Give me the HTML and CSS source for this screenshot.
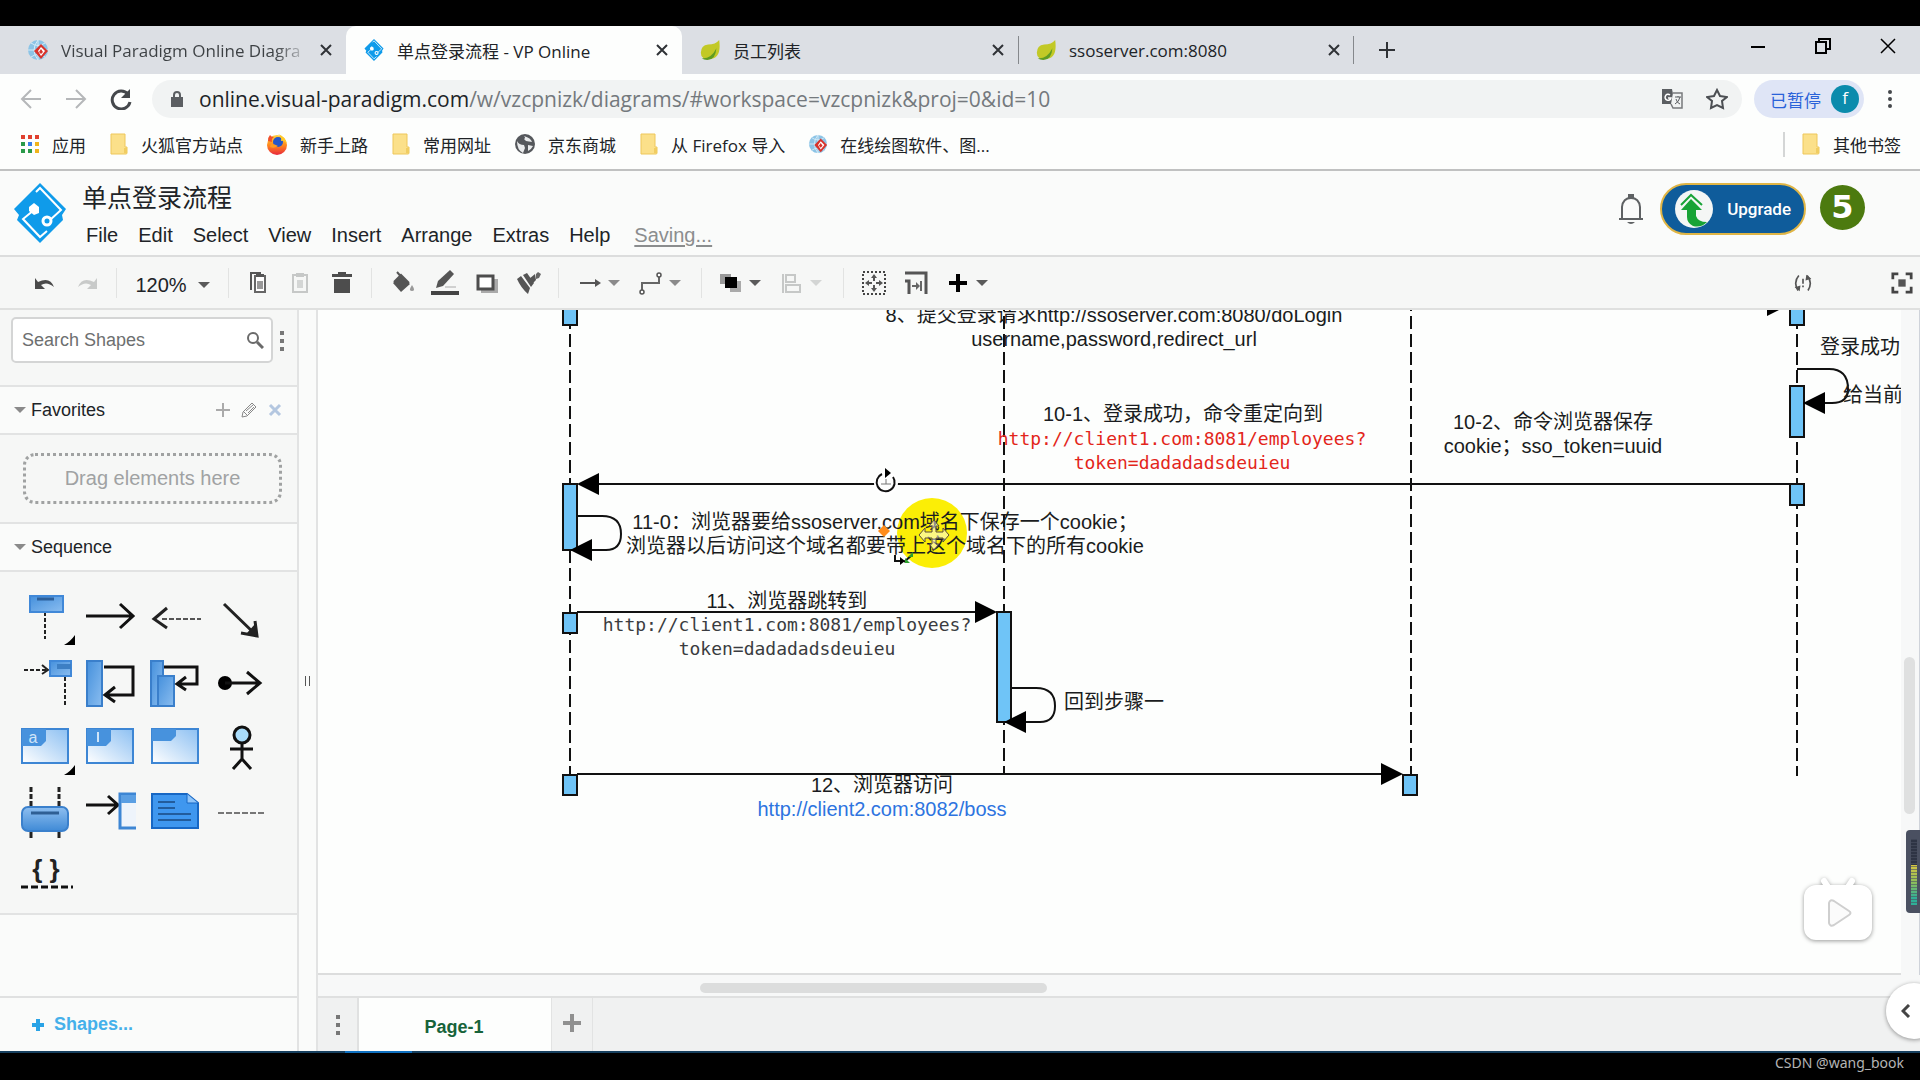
FILE: index.html
```html
<!DOCTYPE html>
<html lang="zh-CN">
<head>
<meta charset="utf-8">
<title>单点登录流程 - VP Online</title>
<link rel="stylesheet" href="styles.css">
</head>
<body>
<svg class="defs" aria-hidden="true">
  <defs>
    <linearGradient id="blue" x1="0" y1="0" x2="1" y2="1"><stop offset="0" stop-color="#4590dc"/><stop offset="1" stop-color="#8abdf0"/></linearGradient>
    <linearGradient id="blueV" x1="0" y1="0" x2="0" y2="1"><stop offset="0" stop-color="#8fbff0"/><stop offset="1" stop-color="#3f8ad6"/></linearGradient>
    <linearGradient id="pale" x1="0" y1="1" x2="1" y2="0"><stop offset="0" stop-color="#ffffff"/><stop offset="1" stop-color="#8dc0f2"/></linearGradient>
    <linearGradient id="fox" x1="0" y1="0" x2="0" y2="1"><stop offset="0" stop-color="#ffd23a"/><stop offset=".5" stop-color="#ff8a1c"/><stop offset="1" stop-color="#e8273d"/></linearGradient>
    <symbol id="i-close" viewBox="0 0 16 16"><path d="M3 3l10 10M13 3L3 13" stroke="#2f3236" stroke-width="2" fill="none"/></symbol>
    <symbol id="i-vpglobe" viewBox="0 0 22 22"><circle cx="11" cy="11" r="10" fill="#8cc4e6"/><path d="M11 1v20M1 11h20M4 4q7 5 14 0M4 18q7-5 14 0M11 1q-8 10 0 20" stroke="#d5ebf7" fill="none"/><path d="M14 5l7 7-7 8-7-8z" fill="#d8342c"/><path d="M14 8l4 4-4 5-3-5z" fill="#fff"/><path d="M14 10l2 3-2 2-2-2z" fill="#d8342c"/></symbol>
    <symbol id="i-vp" viewBox="0 0 52 60"><path d="M26 0l26 26-4 6 1 5-23 23L3 37l2-5-5-6z" fill="#0f9bea"/><path d="M22 9l4-4 21 22-11 10" fill="none" stroke="#fff" stroke-width="2"/><circle cx="33" cy="38" r="4" fill="#0f9bea" stroke="#fff" stroke-width="3"/><path d="M20 27L9 36l17 18 7-6" fill="none" stroke="#fff" stroke-width="2"/><path d="M15 24l5-4 5 4v6l-5 2-5-4z" fill="#fff"/></symbol>
    <symbol id="i-leaf" viewBox="0 0 24 24"><path d="M22 1q3 21-11 21-9 0-9-7 0-8 8-9 8 0 12-5z" fill="#c2c926"/><path d="M3 21q10 1 16-11-1 13-10 13-4 0-6-2z" fill="#5f9c22"/></symbol>
    <symbol id="i-folder" viewBox="0 0 20 22"><path d="M2 1h14v13h2v6q0 1-1 1H2z" fill="#fbe08a" stroke="#eec75a"/><path d="M15 15h3v5h-3z" fill="#f0cd62"/></symbol>
    <symbol id="i-caret" viewBox="0 0 14 8"><path d="M1 1h12L7 7z" fill="currentColor"/></symbol>
    <symbol id="i-dots" viewBox="0 0 6 22"><path d="M1 1h4v4H1zM1 9h4v4H1zM1 17h4v4H1z" fill="currentColor"/></symbol>
    <symbol id="i-corner" viewBox="0 0 12 12"><path d="M0 11Q6 8 11 1v10z" fill="#000"/></symbol>
  </defs>
</svg>

<div class="browser">
  <header class="tabstrip">
    <div class="tab"><svg class="favicon"><use href="#i-vpglobe"/></svg><span class="tab-title fade">Visual Paradigm Online Diagra</span><button class="close" aria-label="关闭"><svg><use href="#i-close"/></svg></button></div>
    <div class="tab active"><svg class="favicon"><use href="#i-vp"/></svg><span class="tab-title">单点登录流程 - VP Online</span><button class="close" aria-label="关闭"><svg><use href="#i-close"/></svg></button></div>
    <div class="tab"><svg class="favicon"><use href="#i-leaf"/></svg><span class="tab-title">员工列表</span><button class="close" aria-label="关闭"><svg><use href="#i-close"/></svg></button></div>
    <div class="tab ruled"><svg class="favicon"><use href="#i-leaf"/></svg><span class="tab-title">ssoserver.com:8080</span><button class="close" aria-label="关闭"><svg><use href="#i-close"/></svg></button></div>
    <button class="newtab" aria-label="新标签页"><svg viewBox="0 0 18 18" width="18" height="18"><path d="M9 1v16M1 9h16" stroke="#2f3236" stroke-width="2"/></svg></button>
    <div class="window-buttons">
      <button aria-label="最小化"><svg viewBox="0 0 16 16" width="16" height="16"><path d="M1 9h14" stroke="#000" stroke-width="2"/></svg></button>
      <button aria-label="还原"><svg viewBox="0 0 16 16" width="16" height="16"><path d="M4 4V1h11v10h-3M1 4h10v11H1z" stroke="#000" stroke-width="2" fill="none"/></svg></button>
      <button aria-label="关闭窗口"><svg viewBox="0 0 16 16" width="16" height="16"><path d="M1 1l14 14M15 1L1 15" stroke="#000" stroke-width="1.5"/></svg></button>
    </div>
  </header>

  <div class="navbar">
    <button class="nav" aria-label="后退"><svg viewBox="0 0 22 22" width="22" height="22"><path d="M21 11H3M11 2l-9 9 9 9" stroke="#b5b7b9" stroke-width="2" fill="none"/></svg></button>
    <button class="nav" aria-label="前进"><svg viewBox="0 0 22 22" width="22" height="22"><path d="M1 11h18M11 2l9 9-9 9" stroke="#b5b7b9" stroke-width="2" fill="none"/></svg></button>
    <button class="nav" aria-label="重新加载"><svg viewBox="0 0 22 22" width="22" height="22"><path d="M18 6a9 9 0 1 0 2 8" stroke="#45484c" stroke-width="3" fill="none"/><path d="M20 1v9h-9z" fill="#45484c"/></svg></button>
    <div class="omnibox">
      <svg viewBox="0 0 14 18" width="14" height="18"><path d="M1 7h12v10H1z" fill="#5b5e62"/><path d="M4 8V5a3 3 0 0 1 6 0v3" fill="none" stroke="#5b5e62" stroke-width="2"/></svg>
      <a class="url" href="#">online.visual-paradigm.com<span>/w/vzcpnizk/diagrams/#workspace=vzcpnizk&amp;proj=0&amp;id=10</span></a>
      <svg viewBox="0 0 22 22" width="22" height="22"><path d="M1 1h10l3 15H1z" fill="#5b5e62"/><path d="M12 5h9v15h-9l-2-4" fill="#f1f3f3" stroke="#77797c" stroke-width="1.5"/><path d="M9 7a3 3 0 1 0 1 3H7" stroke="#fff" stroke-width="1.5" fill="none"/><path d="M14 9h6M17 8v1M19 9q-1 5-5 7M15 11q1 4 4 5" stroke="#5b5e62" fill="none"/></svg>
      <svg viewBox="0 0 22 22" width="22" height="22"><path d="M11 2l3 6 7 1-5 4 1 7-6-3-6 3 1-7-5-4 7-1z" fill="none" stroke="#4c4f53" stroke-width="2"/></svg>
    </div>
    <button class="profile">已暂停<span class="avatar">f</span></button>
    <button class="kebab" aria-label="菜单"><svg viewBox="0 0 6 20" width="6" height="20"><circle cx="3" cy="3" r="2" fill="#45484c"/><circle cx="3" cy="10" r="2" fill="#45484c"/><circle cx="3" cy="17" r="2" fill="#45484c"/></svg></button>
  </div>

  <nav class="bookmarks">
    <a href="#"><svg viewBox="0 0 20 20" width="20" height="20"><path d="M1 1h4v4H1zM8 1h4v4H8zM15 1h4v4h-4z" fill="#e0402f"/><path d="M1 8h4v4H1z" fill="#2a9a4a"/><path d="M8 8h4v4H8z" fill="#3a7fe8"/><path d="M15 8h4v4h-4z" fill="#f0b41c"/><path d="M1 15h4v4H1zM8 15h4v4H8z" fill="#2a9a4a"/><path d="M15 15h4v4h-4z" fill="#f0b41c"/></svg>应用</a>
    <a href="#"><svg class="mark"><use href="#i-folder"/></svg>火狐官方站点</a>
    <a href="#"><svg viewBox="0 0 22 22" width="22" height="22"><circle cx="11" cy="12" r="10" fill="url(#fox)"/><path d="M2 8q0-4 2-6 1 2 4 2-3 2-2 5z" fill="#f0502a"/><circle cx="12" cy="9" r="5" fill="#2456c8"/><path d="M12 1q7 2 9 10-3-4-6-3 1-4-3-7z" fill="#ffc929"/><path d="M5 11q4 0 7 2-4 3-8 1z" fill="#ff9a1f"/></svg>新手上路</a>
    <a href="#"><svg class="mark"><use href="#i-folder"/></svg>常用网址</a>
    <a href="#"><svg viewBox="0 0 22 22" width="22" height="22"><circle cx="11" cy="11" r="10" fill="#55585c"/><path d="M3 8q2 4 7 4l1 3-2 5q-6-3-6-12zM10 3q2 2 0 3l2 2 6 1q-1-4-8-6zM14 12l5 1q-2 4-5 5z" fill="#e9ebec"/></svg>京东商城</a>
    <a href="#"><svg class="mark"><use href="#i-folder"/></svg>从 Firefox 导入</a>
    <a href="#"><svg class="mark"><use href="#i-vpglobe"/></svg>在线绘图软件、图...</a>
    <a href="#" class="other"><svg class="mark"><use href="#i-folder"/></svg>其他书签</a>
  </nav>

  <div class="apphead">
    <svg class="logo" viewBox="0 0 52 60"><use href="#i-vp"/></svg>
    <div class="titles">
      <h1>单点登录流程</h1>
      <nav class="menu">
        <button>File</button><button>Edit</button><button>Select</button><button>View</button><button>Insert</button><button>Arrange</button><button>Extras</button><button>Help</button><a href="#">Saving...</a>
      </nav>
    </div>
    <div class="account">
      <button aria-label="Notifications"><svg viewBox="0 0 26 32" width="26" height="32"><path d="M1 26h24M4 26V14q1-9 9-9t9 9v12" fill="none" stroke="#5e6163" stroke-width="2"/><path d="M10 1h6v4h-6zM9 29h8q-4 4-8 0z" fill="#5e6163"/></svg></button>
      <button class="upgrade"><svg viewBox="0 0 38 38" width="38" height="38"><circle cx="19" cy="19" r="19" fill="#f4f6f5"/><path d="M16 9l11 11h-6v6q2 6 11 6-6 6-14 4-6-3-6-9v-7H6z" fill="#18a336"/><path d="M6 15L16 5l11 10" stroke="#18a336" stroke-width="2" fill="none"/></svg>Upgrade</button>
      <button class="user">5</button>
    </div>
  </div>

  <div class="toolbar">
    <div class="group history">
      <button aria-label="Undo"><svg viewBox="0 0 24 24"><path d="M2 7v11h10l-4-4q6-4 13 2-4-11-16-5z" fill="#4a4a4a"/></svg></button>
      <button aria-label="Redo"><svg viewBox="0 0 24 24"><path d="M22 7v11H12l4-4q-6-4-13 2 4-11 16-5z" fill="#c8cac9"/></svg></button>
    </div>
    <div class="group zoomer"><button class="drop">120%<svg class="caret"><use href="#i-caret"/></svg></button></div>
    <div class="group edit">
      <button aria-label="Copy"><svg viewBox="0 0 24 24"><path d="M5 19V2h10" fill="none" stroke="#555" stroke-width="2"/><path d="M9 5h10v16H9z" fill="#fff" stroke="#666" stroke-width="2"/><path d="M11 10h6v8h-6z" fill="#999"/><path d="M10 3h8v3h-8z" fill="#555"/></svg></button>
      <button aria-label="Paste"><svg viewBox="0 0 24 24"><path d="M5 4h14v17H5z" fill="none" stroke="#c6c8c7" stroke-width="2"/><path d="M9 9h6v8H9z" fill="#d4d6d5"/><path d="M8 2h8v4H8z" fill="#c6c8c7"/></svg></button>
      <button aria-label="Delete"><svg viewBox="0 0 24 24"><path d="M2 3h6V1h8v2h6v3H2zM4 8h16v14H4z" fill="#4d4d4d"/></svg></button>
    </div>
    <div class="group style">
      <button aria-label="Fill"><svg viewBox="0 0 24 24"><path d="M2 12l8-7 9 8-9 8z" fill="#555"/><path d="M3 11L10 4l8 8M6 1l7 8" stroke="#555" stroke-width="2" fill="none"/><path d="M21 14q4 6 0 6t0-6z" fill="#999"/></svg></button>
      <button aria-label="Line"><svg class="wide" viewBox="0 0 30 26"><path d="M6 18l2-7L20 0l4 4-11 12z" fill="#555"/><path d="M15 17h11" stroke="#aaa" stroke-width="1"/><path d="M1 21h28v4H1z" fill="#444"/></svg></button>
      <button aria-label="Shadow"><svg viewBox="0 0 24 24"><path d="M6 8h17v14H6z" fill="#aaa"/><path d="M3 5h15v13H3z" fill="#fff" stroke="#4d4d4d" stroke-width="3"/></svg></button>
      <button aria-label="Copy style"><svg viewBox="0 0 24 24"><path d="M0 8l4-3 9 12-2 6Q4 17 0 8zM6 4l4-2 7 10-3 4zM12 8l6-5 1 6-3 3z" fill="#555"/><path d="M19 3l2-2 3 2-2 4-3 1z" fill="#666"/></svg></button>
    </div>
    <div class="group lines">
      <button class="drop" aria-label="Connection"><svg viewBox="0 0 24 24"><path d="M2 12h18" stroke="#555" stroke-width="2"/><path d="M17 8l6 4-6 4z" fill="#555"/></svg><svg class="caret mid"><use href="#i-caret"/></svg></button>
      <button class="drop" aria-label="Waypoints"><svg viewBox="0 0 24 24"><path d="M3 19v-7h17V6" fill="none" stroke="#666" stroke-width="2"/><circle cx="3" cy="21" r="2" fill="#fff" stroke="#555" stroke-width="1.5"/><circle cx="20" cy="4" r="2" fill="#fff" stroke="#555" stroke-width="1.5"/></svg><svg class="caret mid"><use href="#i-caret"/></svg></button>
    </div>
    <div class="group order">
      <button class="drop" aria-label="To front"><svg viewBox="0 0 24 24"><path d="M1 3h11v10H1z" fill="#999"/><path d="M11 10h11v11H11z" fill="#aaa"/><path d="M6 6h12v11H6z" fill="#000"/></svg><svg class="caret"><use href="#i-caret"/></svg></button>
      <button class="drop" aria-label="Align"><svg viewBox="0 0 24 24"><path d="M3 3v19M6 4h9v7H6zM6 14h14v7H6z" fill="none" stroke="#c6c8c7" stroke-width="2"/></svg><svg class="caret dim"><use href="#i-caret"/></svg></button>
    </div>
    <div class="group fit">
      <button aria-label="Fit window"><svg viewBox="0 0 24 24"><path d="M1 1h22v22H1z" fill="none" stroke="#444" stroke-width="2" stroke-dasharray="2 2"/><path d="M12 3l3 4h-2v3h-2V7H9zM12 21l3-4h-2v-3h-2v3H9zM3 12l4-3v2h3v2H7v2zM21 12l-4-3v2h-3v2h3v2z" fill="#555"/></svg></button>
      <button aria-label="Fit width"><svg viewBox="0 0 24 24"><path d="M1 2h21v21M1 10h4v13" fill="none" stroke="#555" stroke-width="3"/><path d="M8 15h6M17 10v10" stroke="#666" stroke-width="2"/><path d="M12 11l4 4-4 4z" fill="#666"/></svg></button>
      <button class="drop" aria-label="Insert"><svg viewBox="0 0 24 24"><path d="M12 3v18M3 12h18" stroke="#000" stroke-width="4"/></svg><svg class="caret"><use href="#i-caret"/></svg></button>
    </div>
    <div class="views">
      <button aria-label="Sync"><svg viewBox="0 0 24 24" width="20" height="20"><path d="M7 3Q0 11 6 21M17 3q7 8 1 18" fill="none" stroke="#555" stroke-width="2"/><path d="M2 17l6 5 1-7zM22 7l-6-5-1 7zM11 7h2v6h-2zM11 15h2v2h-2z" fill="#555"/></svg></button>
      <button aria-label="Fullscreen"><svg viewBox="0 0 24 24" width="22" height="22"><path d="M2 8V2h6M16 2h6v6M22 16v6h-6M8 22H2v-6" fill="none" stroke="#444" stroke-width="3"/><path d="M8 8h8v8H8z" fill="#555"/></svg></button>
    </div>
  </div>

  <main class="workspace">
    <aside class="sidebar">
      <div class="search">
        <label class="searchbox"><input type="text" placeholder="Search Shapes" aria-label="Search Shapes"><svg viewBox="0 0 18 18" width="18" height="18"><circle cx="7" cy="7" r="5" fill="none" stroke="#6a6a6a" stroke-width="2"/><path d="M11 11l6 6" stroke="#6a6a6a" stroke-width="3"/></svg></label>
        <button aria-label="Options"><svg class="dots"><use href="#i-dots"/></svg></button>
      </div>
      <div class="section">
        <svg class="caret mid"><use href="#i-caret"/></svg><h2>Favorites</h2>
        <button aria-label="Add"><svg viewBox="0 0 16 16" width="16" height="16"><path d="M8 1v14M1 8h14" stroke="#aaa" stroke-width="2"/></svg></button>
        <button aria-label="Edit"><svg viewBox="0 0 16 16" width="16" height="16"><path d="M1 15l1-5L11 1l4 4-9 9zM3 10l3 3M5 9l7-6M7 11l6-6" fill="none" stroke="#888"/></svg></button>
        <button aria-label="Remove"><svg viewBox="0 0 16 16" width="16" height="16"><path d="M3 3l10 10M13 3L3 13" stroke="#b4c7e0" stroke-width="3"/></svg></button>
      </div>
      <div class="dropzone"><div>Drag elements here</div></div>
      <div class="section"><svg class="caret mid"><use href="#i-caret"/></svg><h2>Sequence</h2></div>
      <div class="palette">
        <svg viewBox="0 0 65 65"><path d="M31 28v27" stroke="#222" stroke-width="2" stroke-dasharray="4 2"/><path d="M16 12h33v16H16z" fill="url(#blue)" stroke="#4088d8" stroke-width="2"/><path d="M23 15h17" stroke="#2c5f9a" stroke-width="3"/><use href="#i-corner" x="50" y="50" width="12" height="12"/></svg>
        <svg viewBox="0 0 65 65"><path d="M7 32h46M41 20l13 12-13 12" fill="none" stroke="#111" stroke-width="3"/></svg>
        <svg viewBox="0 0 65 65"><path d="M18 35h39" stroke="#555" stroke-width="2" stroke-dasharray="5 2"/><path d="M23 24L10 35l13 9" fill="none" stroke="#222" stroke-width="3"/></svg>
        <svg viewBox="0 0 65 65"><path d="M15 20l32 31M32 49l16 3-2-15" fill="none" stroke="#222" stroke-width="3"/><path d="M38 49l10 4-2-13z" fill="#222"/></svg>
        <svg viewBox="0 0 65 65"><path d="M10 21h22M51 28v30" stroke="#222" stroke-width="2" stroke-dasharray="4 2"/><path d="M28 16l6 5-6 4" fill="none" stroke="#222" stroke-width="2"/><path d="M36 12h21v15H36z" fill="url(#blue)" stroke="#4088d8" stroke-width="2"/><path d="M43 15h14v5H43z" fill="#3d7fc4"/></svg>
        <svg viewBox="0 0 65 65"><path d="M8 12h15v45H8z" fill="url(#blue)" stroke="#3a7fcb" stroke-width="2"/><path d="M25 18h29v28H27M36 38l-10 8 10 7" fill="none" stroke="#111" stroke-width="3"/></svg>
        <svg viewBox="0 0 65 65"><path d="M7 12h12v45H7z" fill="url(#blue)" stroke="#3a7fcb" stroke-width="2"/><path d="M14 27h16v30H14z" fill="url(#blue)" stroke="#3a7fcb" stroke-width="2"/><path d="M20 18h33v17H34M42 28l-9 7 9 6" fill="none" stroke="#111" stroke-width="3"/></svg>
        <svg viewBox="0 0 65 65"><circle cx="16" cy="34" r="7"/><path d="M16 34h34M38 23l13 11-13 11" fill="none" stroke="#111" stroke-width="3"/></svg>
        <svg viewBox="0 0 65 65"><path d="M8 15h46v34H8z" fill="url(#pale)" stroke="#3d86d4" stroke-width="2"/><path d="M8 15h24v12l-5 5H8z" fill="#4792dd"/><text x="19" y="29" class="frag">a</text><use href="#i-corner" x="50" y="50" width="12" height="12"/></svg>
        <svg viewBox="0 0 65 65"><path d="M8 15h46v34H8z" fill="url(#pale)" stroke="#3d86d4" stroke-width="2"/><path d="M8 15h24v12l-5 5H8z" fill="#4792dd"/><path d="M19 18v10" stroke="#cfe4f8" stroke-width="2"/></svg>
        <svg viewBox="0 0 65 65"><path d="M8 15h46v34H8z" fill="url(#pale)" stroke="#3d86d4" stroke-width="2"/><path d="M8 15h24v7l-5 5H8z" fill="#4792dd"/></svg>
        <svg viewBox="0 0 65 65"><circle cx="33" cy="21" r="8" fill="#a9dcfa" stroke="#111" stroke-width="3"/><path d="M33 30v16M21 35h23M33 45l-9 10M33 45l9 10" fill="none" stroke="#111" stroke-width="3"/></svg>
        <svg viewBox="0 0 65 65"><path d="M17 8v20M45 8v20" stroke="#222" stroke-width="3" stroke-dasharray="5 2"/><path d="M17 53v6M45 53v6" stroke="#222" stroke-width="3"/><rect x="8" y="28" width="46" height="24" rx="6" fill="url(#blueV)" stroke="#3a80cc" stroke-width="2"/><path d="M17 34h28" stroke="#2f5f94" stroke-width="3"/></svg>
        <svg viewBox="0 0 65 65"><path d="M7 26h31M29 17l10 9-10 9" fill="none" stroke="#111" stroke-width="3"/><path d="M57 15H41v34h16" fill="#eef4fb" stroke="#3d86d4" stroke-width="3"/><path d="M42 16h15v8H42z" fill="#5b9fe3"/></svg>
        <svg viewBox="0 0 65 65"><path d="M8 15h35l11 9v25H8z" fill="#3f97ef" stroke="#1767c4" stroke-width="2"/><path d="M43 15v9h11" fill="#8fc5fa" stroke="#1767c4"/><path d="M14 23h17M14 29h17M14 35h33M14 41h33" stroke="#225c9c" stroke-width="2"/></svg>
        <svg viewBox="0 0 65 65"><path d="M9 34h48" stroke="#777" stroke-width="2" stroke-dasharray="6 2"/></svg>
        <svg viewBox="0 0 65 65"><text x="32" y="34" class="brace">{ }</text><path d="M7 43h52" stroke="#111" stroke-width="3" stroke-dasharray="7 3"/></svg>
      </div>
      <div class="more"><button><svg viewBox="0 0 14 14" width="14" height="14"><path d="M7 1v12M1 7h12" stroke="#29a3e6" stroke-width="4"/></svg>Shapes...</button></div>
    </aside>

    <div class="splitter"><span></span></div>

    <section class="editor">
      <div class="stage">
        <div class="canvas">
          <svg class="diagram" width="1600" height="680" viewBox="318 310 1600 680">
            <circle cx="932" cy="533" r="35" fill="#fbee06"/>
            <g class="lifeline"><path d="M570 298V774M1004 298V774M1411 298V774M1797 298V776"/></g>
            <g class="activation">
              <path d="M563 300h14v25h-14zM563 484h14v66h-14zM563 613h14v20h-14zM563 775h14v20h-14zM997 612h14v110h-14zM1403 775h14v20h-14zM1790 300h14v25h-14zM1790 386h14v51h-14zM1790 484h14v21h-14z"/>
            </g>
            <g class="message">
              <path d="M598 484H1790M577 516h25q19 0 19 18q0 16-15 16H592M577 612H975M1011 688h25q19 0 19 18q0 16-15 16H1026M577 774H1381M1797 369h32q19 0 19 20q0 14-16 14h-8"/>
            </g>
            <path class="heads" d="M577 484l22-11v22zM570 550l22-11v22zM997 612l-22-11v22zM1004 722l22-11v22zM1403 774l-22-11v22zM1803 403l22-11v22zM1789 305l-22-11v22z"/>
            <g class="label">
              <text x="1114" y="322">8、提交登录请求http://ssoserver.com:8080/doLogin</text>
              <text x="1114" y="346">username,password,redirect_url</text>
              <text x="1183" y="421">10-1、登录成功，命令重定向到</text>
              <text x="1182" y="445" class="mono red">http://client1.com:8081/employees?</text>
              <text x="1182" y="469" class="mono red">token=dadadadsdeuieu</text>
              <text x="1553" y="429">10-2、命令浏览器保存</text>
              <text x="1553" y="453">cookie；sso_token=uuid</text>
              <text x="885" y="529">11-0：浏览器要给ssoserver.com域名下保存一个cookie；</text>
              <text x="885" y="553">浏览器以后访问这个域名都要带上这个域名下的所有cookie</text>
              <text x="787" y="608">11、浏览器跳转到</text>
              <text x="787" y="631" class="mono">http://client1.com:8081/employees?</text>
              <text x="787" y="655" class="mono">token=dadadadsdeuieu</text>
              <text x="1114" y="709">回到步骤一</text>
              <text x="882" y="792">12、浏览器访问</text>
              <text x="882" y="816" class="link">http://client2.com:8082/boss</text>
              <text x="1860" y="354">登录成功</text>
              <text x="1873" y="402">给当前</text>
            </g>
            <circle cx="886" cy="483" r="12" fill="#fff"/>
            <path d="M882 474a9 9 0 1 0 11 3" fill="none" stroke="#111" stroke-width="2"/><path d="M885 468l6 5-6 5z"/><path d="M881 484h10M886 479v5" stroke="#777" fill="none"/>
            <path d="M884 525l6 6-6 6-6-6z" fill="#ff8c1a"/>
            <path d="M895 555v6h6M904 562l8-7" fill="none" stroke="#111" stroke-width="2"/><path d="M900 557l5 4-5 4z"/><path d="M905 558v5h5zM913 552v5h-5z" fill="#2da02d"/>
            <path d="M934 520l5 6h-3v6h7v-4l6 7-6 7v-4h-7v6h3l-5 6-5-6h3v-6h-7v4l-6-7 6-7v4h7v-6h-3z" fill="#fff" fill-opacity=".5" stroke="#5b4a3c"/>
          </svg>
          <div class="player"><svg viewBox="0 0 80 76" width="80" height="76"><path d="M26 10l6 9M54 10l-6 9" stroke="#fff" stroke-width="6" stroke-linecap="round"/><rect x="6" y="14" width="68" height="55" rx="12" fill="#fff"/><path d="M31 32v20q1 4 5 2l15-10q3-2 0-4L36 30q-4-2-5 2z" fill="#fbfbfb" stroke="#cfcfcf" stroke-width="2"/></svg></div>
        </div>
        <div class="hscroll"><span></span></div>
        <div class="vscroll"><span></span></div>
      </div>
      <footer class="pages">
        <button class="pagemenu" aria-label="Pages"><svg class="dots"><use href="#i-dots"/></svg></button>
        <button class="page">Page-1</button>
        <button class="addpage" aria-label="Insert page"><svg viewBox="0 0 20 20" width="20" height="20"><path d="M10 1v18M1 10h18" stroke="#909090" stroke-width="4"/></svg></button>
      </footer>
    </section>
  </main>
  <div class="meter"><span></span></div>
  <button class="expand" aria-label="Show format panel"><svg viewBox="0 0 10 14" width="10" height="14"><path d="M8 1L2 7l6 6" fill="none" stroke="#444" stroke-width="3"/></svg></button>
</div>
<div class="taskline"><span></span></div>
<p class="watermark">CSDN @wang_book</p>
</body>
</html>
```
FILE: styles.css
```css
* { box-sizing: border-box; }

body {
  margin: 0;
  padding-top: 26px;
  height: 100vh;
  display: flex;
  flex-direction: column;
  overflow: hidden;
  background: #000;
  color: #202327;
  font-family: "Liberation Sans", "Noto Sans CJK SC", sans-serif;
}

button {
  display: flex;
  align-items: center;
  justify-content: center;
  padding: 0;
  border: 0;
  background: none;
  color: inherit;
  font: inherit;
}

a { color: inherit; text-decoration: none; }
svg { display: block; flex: none; }
h1, h2, p { margin: 0; font-weight: 400; }
.defs { position: absolute; width: 0; height: 0; }

.browser {
  position: relative;
  flex: 1;
  min-height: 0;
  display: flex;
  flex-direction: column;
  overflow: hidden;
  background: #fdfefd;
}

/* Browser chrome */
.tabstrip, .navbar, .bookmarks { font-family: "Open Sans", "Noto Sans CJK SC", sans-serif; }

.tabstrip {
  display: flex;
  align-items: center;
  height: 48px;
  padding-left: 10px;
  background: #dcdfe4;
  font-size: 17px;
}

.tab {
  display: flex;
  align-items: center;
  width: 336px;
  height: 100%;
  padding: 0 12px 0 17px;
}
.tab.active { background: #fdfefd; border-radius: 10px 10px 0 0; }
.ruled { background: linear-gradient(#85888c, #85888c) left center / 1px 28px no-repeat, linear-gradient(#85888c, #85888c) right center / 1px 28px no-repeat; }
.favicon { width: 22px; height: 22px; margin-right: 12px; }
.tab-title { flex: 1; min-width: 0; overflow: hidden; white-space: nowrap; }
.fade { color: transparent; background: linear-gradient(90deg, #3c4043 86%, #dcdfe4 100%); background-clip: text; }
.close { width: 16px; height: 16px; margin-left: 8px; }
.close svg { width: 16px; height: 16px; }
.newtab { width: 66px; height: 40px; }
.window-buttons { display: flex; margin-left: auto; padding-bottom: 8px; }
.window-buttons button { width: 65px; height: 40px; }

.navbar { display: flex; align-items: center; height: 50px; padding: 0 26px 0 8px; }
.nav { width: 45px; height: 38px; }
.omnibox {
  flex: 1;
  display: flex;
  align-items: center;
  height: 38px;
  margin-left: 9px;
  padding: 0 14px 0 18px;
  border-radius: 19px;
  background: #f1f3f3;
}
.url { flex: 1; padding-left: 15px; font-size: 21px; line-height: 28px; white-space: nowrap; }
.url span { color: #74797d; }
.omnibox svg + svg { margin-left: 23px; }
.profile {
  gap: 10px;
  height: 38px;
  margin: 0 22px 0 12px;
  padding: 0 5px 0 16px;
  border-radius: 19px;
  background: #dfe5f6;
  color: #2a62d9;
  font-size: 17px;
}
.avatar { width: 28px; height: 28px; border-radius: 50%; background: #0b8bac; color: #fff; line-height: 26px; }
.kebab { width: 8px; height: 38px; }

.bookmarks { display: flex; align-items: center; gap: 23px; height: 47px; padding: 0 19px 5px 20px; font-size: 17px; border-bottom: 2px solid #c0c1c1; }
.bookmarks a { display: flex; align-items: center; gap: 12px; white-space: nowrap; }
.bookmarks .mark { width: 20px; height: 22px; }
.bookmarks .other { margin-left: auto; padding-left: 16px; border-left: 2px solid #d4d6d6; }

/* Application header */
.apphead { display: flex; height: 86px; padding: 12px 50px 0 14px; background: #fafbfa; border-bottom: 2px solid #dcdddd; }
.logo { width: 52px; height: 60px; }
.titles { padding-left: 16px; }
.titles h1 { font-size: 25px; line-height: 30px; }
.menu { display: flex; gap: 20px; padding: 10px 0 0 4px; font-size: 20px; line-height: 24px; }
.menu a { margin-left: 4px; color: #8b8d8e; text-decoration: underline; text-underline-offset: 3px; }
.account { display: flex; align-items: center; gap: 16px; margin-left: auto; height: 52px; }
.upgrade {
  gap: 14px;
  height: 52px;
  padding: 0 13px;
  border: 2px solid #e0b545;
  border-radius: 26px;
  background: #0f5c9b;
  color: #fff;
  font: 500 17px Roboto, sans-serif;
}
.user { width: 45px; height: 45px; margin: 0 5px 4px -2px; border-radius: 50%; background: #4c7a0f; color: #fff; font: 700 32px "DejaVu Sans", sans-serif; }

/* Toolbar */
.toolbar { display: flex; align-items: center; height: 53px; background: #f6f7f6; border-bottom: 2px solid #dfe0df; }
.group { display: flex; height: 30px; border-right: 1px solid #e2e3e2; }
.group button { width: 42px; height: 30px; }
.group button svg { width: 24px; height: 24px; }
.group button .wide { width: 30px; height: 26px; }
.group .drop { width: 61px; gap: 5px; }
.caret, .group button .caret { width: 14px; height: 8px; color: #5a5a5a; }
.mid, .group button .mid { color: #8a8a8a; }
.group button .dim { color: #d3d5d4; }
.history { padding: 0 8px 0 24px; }
.zoomer { padding: 0 17px 0 18px; font-size: 20px; }
.group.zoomer .drop { width: 76px; gap: 10px; padding: 5px 0 0; }
.edit { padding: 0 8px; }
.style { padding: 0 8px 0 10px; }
.lines { padding: 0 10px; }
.order { padding: 0 11px 0 8px; }
.group.fit { padding-left: 9px; border: 0; }
.views { display: flex; gap: 78px; margin-left: auto; padding-right: 7px; }

/* Workspace */
.workspace { flex: 1; min-height: 0; display: flex; background: #fafbfa; }
.sidebar { display: flex; flex-direction: column; width: 299px; border-right: 2px solid #e2e3e3; }
.search { display: flex; align-items: flex-start; gap: 6px; height: 75px; padding: 7px 0 0 11px; background: #f6f7f6; }
.searchbox { display: flex; align-items: center; width: 262px; height: 46px; padding: 0 7px 0 9px; border: 2px solid #d4d5d5; border-radius: 5px; background: #fff; }
.searchbox input { flex: 1; min-width: 0; padding: 0; border: 0; background: none; font: 18px "Liberation Sans", sans-serif; color: #555; }
.searchbox input::placeholder { color: #6d6f70; opacity: 1; }
.search button { height: 48px; }
.dots { width: 6px; height: 22px; color: #777; }
.section { display: flex; align-items: center; gap: 10px; height: 50px; padding: 0 14px 0 13px; border-top: 2px solid #e2e3e3; border-bottom: 2px solid #e2e3e3; }
.section h2 { flex: 1; margin-left: -6px; font-size: 18px; }
.dropzone { padding: 18px 15px 18px 23px; background: #f6f7f6; }
.dropzone div { height: 51px; border: 3px dotted #a0a2a2; border-radius: 12px; color: #a0a2a3; font-size: 20px; line-height: 45px; text-align: center; }
.palette { display: grid; grid-template-columns: repeat(4, 65px); padding: 12px 14px 4px; background: #f6f7f6; border-bottom: 2px solid #e2e3e3; }
.palette svg { width: 65px; height: 65px; }
.frag { fill: #cfe4f8; font-size: 16px; text-anchor: middle; }
.brace { fill: #222; font-size: 26px; font-weight: 700; text-anchor: middle; }
.more { display: flex; height: 55px; margin-top: auto; padding-left: 31px; border-top: 2px solid #e0e1e1; }
.more button { gap: 9px; color: #45b0ea; font: 700 18px "Liberation Sans", sans-serif; }

.splitter { display: flex; align-items: center; justify-content: center; width: 19px; border-right: 2px solid #e2e3e3; }
.splitter span { width: 5px; height: 10px; border: solid #555; border-width: 0 1px; }

.editor { flex: 1; min-width: 0; display: flex; flex-direction: column; }
.stage { flex: 1; min-height: 0; display: grid; grid-template: minmax(0, 1fr) 21px / minmax(0, 1fr) 19px; background: #f7f8f8; }
.canvas { position: relative; overflow: hidden; background: #fdfefd; border-bottom: 2px solid #dcdddd; }
.hscroll { grid-row: 2; padding: 8px 0 0 382px; }
.hscroll span { display: block; width: 347px; height: 10px; border-radius: 5px; background: #dcdddd; }
.vscroll { grid-row: 1; grid-column: 2; padding: 347px 4px 0 3px; border-right: 1px solid #cfd3da; }
.vscroll span { display: block; height: 157px; border-radius: 6px; background: #dfe0e0; }

.lifeline path { fill: none; stroke: #111; stroke-width: 2; stroke-dasharray: 13 5; }
.activation path { fill: #6fc4f7; stroke: #111; stroke-width: 2; }
.message path { fill: none; stroke: #111; stroke-width: 2; }
.label text { fill: #1a1c20; font-size: 20px; text-anchor: middle; }
.label .mono { font-family: "DejaVu Sans Mono", monospace; font-size: 18px; fill: #3a3c40; }
.label .red { fill: #e3261b; }
.label .link { fill: #2d74e0; }

.player { position: absolute; right: 23px; bottom: 26px; filter: drop-shadow(0 1px 2px #0006); }

.pages { display: flex; height: 55px; border-top: 2px solid #dfe0e0; background: #f0f1f1; }
.pagemenu { width: 41px; border-right: 2px solid #e0e1e1; }
.page { width: 192px; padding: 6px 2px 0 0; background: #fdfefd; color: #17633a; font: 700 18px "Liberation Sans", sans-serif; }
.addpage { width: 42px; padding-bottom: 4px; border: solid #e2e3e3; border-width: 0 1px; }

.meter { position: absolute; right: 0; bottom: 138px; width: 14px; height: 83px; padding: 9px 3px 8px 5px; border-radius: 4px 0 0 4px; background: #4a5061; }
.meter span { display: block; height: 100%; background: repeating-linear-gradient(#4a506199 0 1px, transparent 1px 3px), linear-gradient(#2e3444 0 40%, #d5c643 40%, #8fbe5a 65%, #2fae97 90%); }
.expand { position: absolute; right: -22px; bottom: 12px; width: 56px; height: 56px; padding-right: 16px; border-radius: 50%; background: #fff; box-shadow: 0 1px 4px #0006; }

.taskline { height: 2px; padding-left: 345px; background: #17405f; }
.taskline span { display: block; width: 67px; height: 2px; background: #0f70c0; }
.watermark { height: 27px; padding: 0 16px 0 0; color: #b4b4b4; font: 14px/20px "Noto Sans", sans-serif; text-align: right; }
```
